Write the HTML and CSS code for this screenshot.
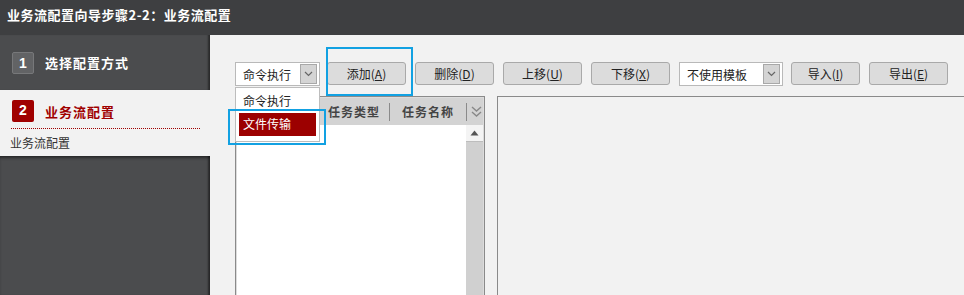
FILE: index.html
```html
<!DOCTYPE html>
<html lang="zh-CN">
<head>
    <meta charset="UTF-8">
    <title>业务流配置向导</title>
    <link rel="stylesheet" href="styles.css">
</head>
<body>
    <div class="titlebar">业务流配置向导步骤2-2：业务流配置</div>
    <div class="main">
        <div class="sidebar">
            <div class="step step-done">
                <span class="badge">1</span>
                <span class="step-label">选择配置方式</span>
            </div>
            <div class="step step-active">
                <div class="step-head">
                    <span class="badge">2</span>
                    <span class="step-label">业务流配置</span>
                </div>
                <div class="step-sub">业务流配置</div>
            </div>
            <div class="sidebar-rest"></div>
        </div>
        <div class="content">
            <div class="toolbar">
                <div class="combo combo-type">
                    <span class="combo-text">命令执行</span>
                    <span class="combo-arrow"><svg width="9" height="6" viewBox="0 0 9 6"><path d="M1 1l3.5 3.5L8 1" fill="none" stroke="#666" stroke-width="1.2"/></svg></span>
                    <ul class="combo-list">
                        <li>命令执行</li>
                        <li class="selected">文件传输</li>
                    </ul>
                    <div class="mark mark-list"></div>
                </div>
                <button class="btn btn-add">添加(<u>A</u>)<span class="mark mark-add"></span></button>
                <button class="btn">删除(<u>D</u>)</button>
                <button class="btn">上移(<u>U</u>)</button>
                <button class="btn">下移(<u>X</u>)</button>
                <div class="combo combo-tpl">
                    <span class="combo-text">不使用模板</span>
                    <span class="combo-arrow"><svg width="9" height="6" viewBox="0 0 9 6"><path d="M1 1l3.5 3.5L8 1" fill="none" stroke="#666" stroke-width="1.2"/></svg></span>
                </div>
                <button class="btn btn-sm">导入(<u>I</u>)</button>
                <button class="btn">导出(<u>E</u>)</button>
            </div>
            <div class="panels">
                <div class="list-panel">
                    <div class="list-head">
                        <span class="col col-check"></span>
                        <span class="col col-type">任务类型</span>
                        <span class="col col-name">任务名称</span>
                        <span class="col col-more"><svg width="11" height="14" viewBox="0 0 11 14"><path d="M1 2l4.5 4L10 2M1 7l4.5 4L10 7" fill="none" stroke="#888" stroke-width="1.4"/></svg></span>
                    </div>
                    <div class="list-body">
                        <div class="rows"></div>
                        <div class="scrollbar">
                            <span class="scroll-up"><svg width="9" height="6" viewBox="0 0 9 6"><path d="M0.5 5.5L4.5 0.5L8.5 5.5Z" fill="#555"/></svg></span>
                        </div>
                    </div>
                </div>
                <div class="detail-panel"></div>
            </div>
        </div>
    </div>
</body>
</html>
```

FILE: styles.css
```css
* {
    margin: 0;
    padding: 0;
    box-sizing: border-box;
}
html, body {
    height: 100%;
}
body {
    font-family: "Noto Sans CJK SC", "Liberation Sans", sans-serif;
    font-size: 12px;
    color: #222;
    background-color: #f2f2f2;
    overflow: hidden;
}
.titlebar {
    height: 35px;
    line-height: 29px;
    padding-left: 7px;
    background-color: #3e3f41;
    color: #fff;
    font-weight: bold;
    font-size: 13px;
    letter-spacing: .5px;
}
.main {
    display: flex;
    height: calc(100% - 35px);
}
.sidebar {
    width: 210px;
    display: flex;
    flex-direction: column;
    flex-shrink: 0;
}
.step {
    box-shadow: inset -3px 0 2px -1px rgba(0, 0, 0, .45);
}
.step-label {
    font-size: 13px;
    letter-spacing: 1px;
    font-weight: bold;
}
.step-done {
    height: 55px;
    display: flex;
    align-items: center;
    padding-left: 12px;
    background-color: #4b4c4e;
    color: #fff;
}
.badge {
    width: 22px;
    height: 22px;
    line-height: 21px;
    text-align: center;
    border-radius: 2px;
    font-family: "Liberation Sans", sans-serif;
    font-weight: bold;
    font-size: 14px;
    color: #fff;
    margin-right: 11px;
}
.step-done .badge {
    background-color: #626365;
    border: 1px solid #77787a;
}
.step-active {
    height: 66px;
    background-color: #f2f2f2;
    box-shadow: none;
}
.step-head {
    display: flex;
    align-items: center;
    height: 39px;
    padding-top: 4px;
    padding-left: 1px;
    margin: 0 10px 0 11px;
    border-bottom: 1px dotted #a00000;
}
.step-active .badge {
    background-color: #a00000;
}
.step-active .step-label {
    color: #a00000;
}
.step-sub {
    padding-left: 10px;
    line-height: 27px;
    color: #333;
}
.sidebar-rest {
    flex: 1;
    background-color: #4b4c4e;
    box-shadow: inset -3px 0 2px -1px rgba(0, 0, 0, .45),
                inset 0 3px 3px -1px rgba(0, 0, 0, .45);
}
.content {
    flex: 1;
    padding: 27px 0 0 25px;
    display: flex;
    flex-direction: column;
}
.toolbar {
    display: flex;
    align-items: flex-start;
    height: 24px;
}
.combo {
    position: relative;
    height: 24px;
    display: flex;
    align-items: center;
    background-color: #fff;
    border: 1px solid #b9b9b9;
    padding: 0 2px 0 7px;
}
.combo-type {
    width: 85px;
    margin-right: 7px;
}
.combo-tpl {
    width: 104px;
    margin-right: 8px;
    padding-left: 7px;
}
.combo-text {
    flex: 1;
    white-space: nowrap;
}
.combo-arrow {
    width: 17px;
    height: 20px;
    display: flex;
    align-items: center;
    justify-content: center;
    background-color: #d4d4d4;
    border: 1px solid #a8a8a8;
}
.combo-list {
    position: absolute;
    top: 24px;
    left: -1px;
    width: 85px;
    height: 55px;
    list-style: none;
    background-color: #fff;
    border: 1px solid #bdbdbd;
    padding: 2px 3px;
    z-index: 3;
}
.combo-list li {
    height: 23px;
    line-height: 22px;
    padding-left: 4px;
}
.combo-list li.selected {
    background-color: #9c0000;
    color: #fff;
}
.mark {
    position: absolute;
    border: 2px solid #12a1e2;
    z-index: 4;
    pointer-events: none;
}
.mark-list {
    left: -8px;
    top: 46px;
    width: 98px;
    height: 36px;
}
.btn {
    position: relative;
    width: 79px;
    height: 23px;
    margin-right: 9px;
    font-family: "Noto Sans CJK SC", "Liberation Sans", sans-serif;
    font-size: 12px;
    color: #222;
    background-color: #dcdcdc;
    border: 1px solid #a9a9a9;
    border-radius: 3px;
    line-height: 20px;
}
.btn u {
    text-underline-offset: 1px;
}
.btn-sm {
    width: 69px;
}
.mark-add {
    left: -2px;
    top: -16px;
    width: 87px;
    height: 49px;
}
.panels {
    flex: 1;
    display: flex;
    margin-top: 10px;
    margin-right: -4px;
}
.list-panel {
    width: 250px;
    display: flex;
    flex-direction: column;
    background-color: #fff;
    border: 1px solid #8a8a8a;
    border-bottom: none;
    box-shadow: inset 1px 1px 0 #dcdcdc, inset -1px 0 0 #dcdcdc;
}
.list-head {
    height: 27px;
    display: flex;
    align-items: center;
    background-color: #d3d3d3;
    color: #444;
    font-weight: bold;
    margin: 1px 1px 0 1px;
}
.col {
    height: 18px;
    line-height: 18px;
    white-space: nowrap;
    letter-spacing: 1px;
}
.col-check {
    width: 83px;
}
.col-type {
    width: 70px;
    padding-left: 8px;
    border-right: 1px solid #8a8a8a;
}
.col-name {
    width: 77px;
    padding-left: 12px;
    border-right: 1px solid #8a8a8a;
}
.col-more {
    display: flex;
    align-items: center;
    padding-left: 4px;
}
.list-body {
    flex: 1;
    display: flex;
}
.rows {
    flex: 1;
}
.scrollbar {
    width: 17px;
    margin-right: 1px;
    background-color: #d0d0d0;
}
.scroll-up {
    display: flex;
    align-items: center;
    justify-content: center;
    height: 17px;
    background-color: #f4f4f4;
    border-bottom: 1px solid #bdbdbd;
}
.detail-panel {
    flex: 1;
    margin-left: 12px;
    background-color: #f2f2f2;
    border: 1px solid #8a8a8a;
    border-bottom: none;
}
```
